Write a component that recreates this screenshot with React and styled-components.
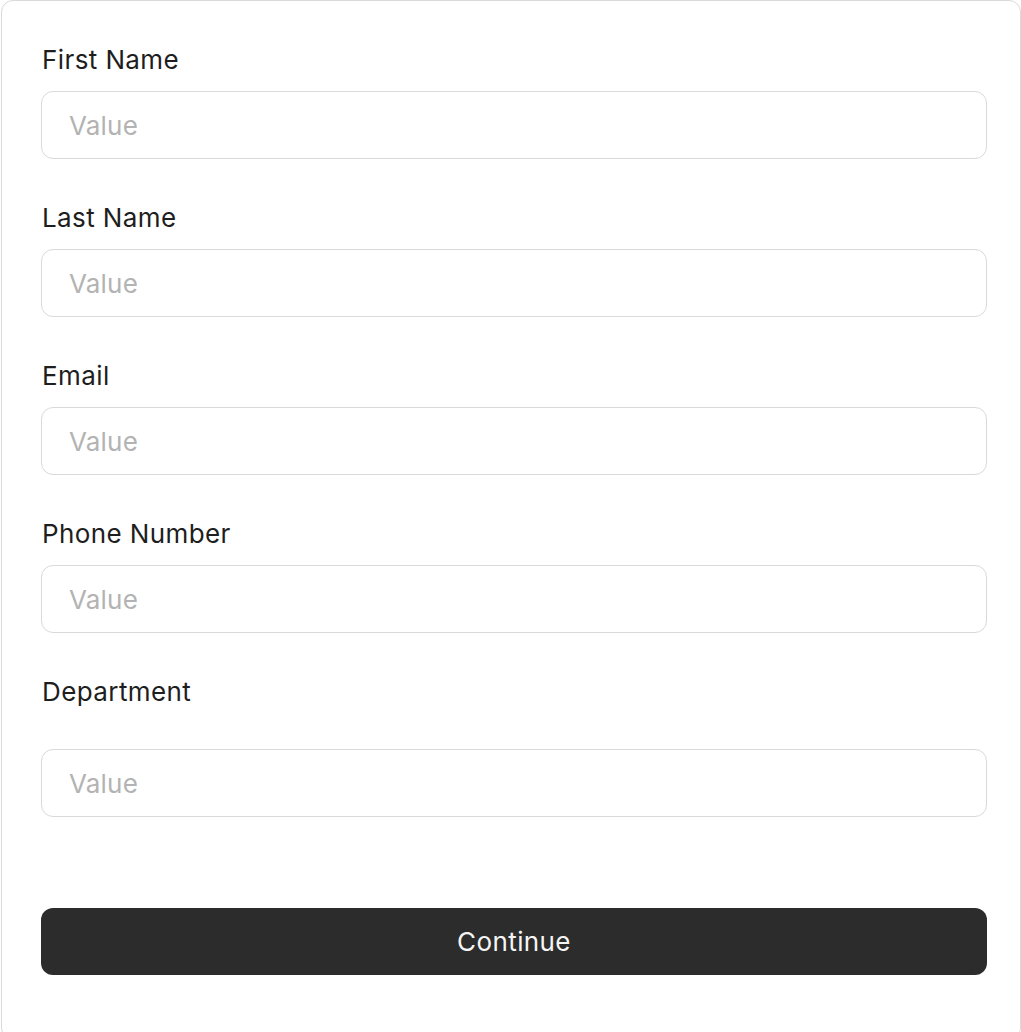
import React from "react";
import styled, {createGlobalStyle} from "styled-components";

const GlobalStyle = createGlobalStyle`
  html, body {
    margin: 0;
    padding: 0;
    background: #ffffff;
  }
  body {
    font-family: Inter, "Noto Sans", sans-serif;
  }
`;

const Card = styled.form`
  box-sizing: border-box;
  width: 1020px;
  min-height: 1040px;
  margin-left: 1px;
  padding: 42px 33px 0 39px;
  background: #fff;
  border: 1px solid #d9d9d9;
  border-radius: 12px;
  display: flex;
  flex-direction: column;
`;

const Field = styled.div`
  display: flex;
  flex-direction: column;
  gap: ${props => props.$gap}px;
  margin-bottom: 42px;
`;

const Label = styled.label`
  font-size: 26px;
  line-height: 34px;
  letter-spacing: 0.4px;
  color: #1e1e1e;
  padding-left: 1px;
`;

const Input = styled.input`
  box-sizing: border-box;
  height: 68px;
  width: 100%;
  padding: 0 27px;
  border: 1.5px solid #d9d9d9;
  border-radius: 12px;
  font-family: Inter, "Noto Sans", sans-serif;
  font-size: 26px;
  letter-spacing: 0.2px;
  color: #1e1e1e;
  outline: none;

  &::placeholder {
    color: #b3b3b3;
  }
`;

const Button = styled.button`
  height: 67px;
  margin-top: 49px;
  border: none;
  border-radius: 12px;
  background: #2c2c2c;
  color: #f5f5f5;
  font-family: Inter, "Noto Sans", sans-serif;
  font-size: 26px;
  letter-spacing: 0.4px;
  cursor: pointer;
`;

const fields = [
  {label: "First Name", gap: 14},
  {label: "Last Name", gap: 14},
  {label: "Email", gap: 14},
  {label: "Phone Number", gap: 14},
  {label: "Department", gap: 40}
];

export default function App() {
  return <>
    <GlobalStyle/>
    <Card onSubmit={e => e.preventDefault()}>
      {fields.map(f => (
        <Field key={f.label} $gap={f.gap}>
          <Label>{f.label}</Label>
          <Input placeholder="Value"/>
        </Field>
      ))}
      <Button type="submit">Continue</Button>
    </Card>
  </>;
}
